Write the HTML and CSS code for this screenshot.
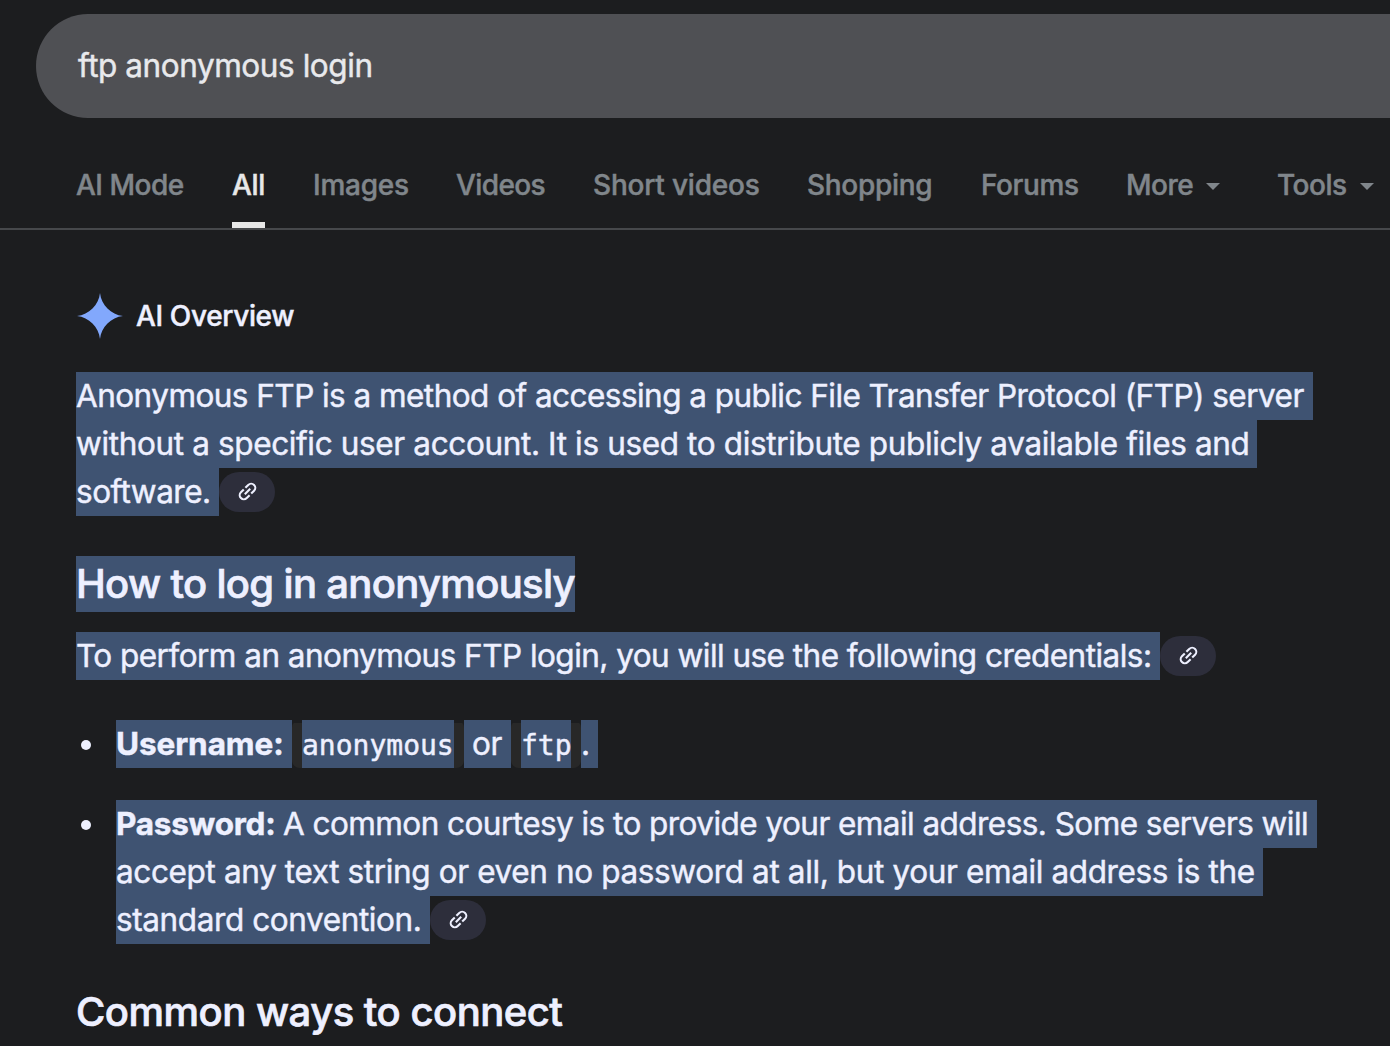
FILE: index.html
```html
<!DOCTYPE html>
<html lang="en">
<head>
<meta charset="utf-8">
<title>ftp anonymous login - Search</title>
<link rel="stylesheet" href="styles.css">
</head>
<body>
<svg class="defs" aria-hidden="true">
  <symbol id="link" viewBox="0 0 24 24">
    <g transform="rotate(-45 12 12)" fill="none" stroke="currentColor" stroke-width="2.2">
      <path d="M10.8 7.7H6.6a4.3 4.3 0 0 0 0 8.6H10.8M13.2 7.7h4.2a4.3 4.3 0 0 1 0 8.6H13.2M8 12h8"/>
    </g>
  </symbol>
</svg>
<header class="search"><span class="query">ftp anonymous login</span></header>
<nav class="tabs">
  <a class="tab ai-mode">AI Mode</a>
  <a class="tab all active">All</a>
  <a class="tab images">Images</a>
  <a class="tab videos">Videos</a>
  <a class="tab short">Short videos</a>
  <a class="tab shopping">Shopping</a>
  <a class="tab forums">Forums</a>
  <a class="tab more">More<i class="caret"></i></a>
  <a class="tab tools">Tools<i class="caret"></i></a>
</nav>
<main class="overview">
  <div class="title">
    <svg class="spark" viewBox="0 0 46 46"><path fill="#82a8fc" d="M23 0C24.3 12 34 21.7 46 23C34 24.3 24.3 34 23 46C21.7 34 12 24.3 0 23C12 21.7 21.7 12 23 0Z"/></svg>
    <span class="title-text">AI Overview</span>
  </div>
  <p class="intro">
    <span class="line"><span class="sel i1">Anonymous FTP is a method of accessing a public File Transfer Protocol (FTP) server</span></span>
    <span class="line"><span class="sel i2">without a specific user account. It is used to distribute publicly available files and</span></span>
    <span class="line"><span class="sel i3">software.</span><span class="chip"><svg><use href="#link"/></svg></span></span>
  </p>
  <h2 class="heading"><span class="sel h1">How to log in anonymously</span></h2>
  <p class="perform line"><span class="sel p1">To perform an anonymous FTP login, you will use the following credentials:</span><span class="chip"><svg><use href="#link"/></svg></span></p>
  <ul class="list">
    <li class="item">
      <span class="line"><span class="sel u1"><b>Username:</b></span><code class="code"><span class="sel c1">anonymous</span></code><span class="sel u2">or</span><code class="code"><span class="sel c2">ftp</span></code><span class="sel u3">.</span></span>
    </li>
    <li class="item">
      <span class="line"><span class="sel w1"><b>Password:</b><span class="courtesy">A common courtesy is to provide your email address. Some servers will</span></span></span>
      <span class="line"><span class="sel w2">accept any text string or even no password at all, but your email address is the</span></span>
      <span class="line"><span class="sel w3">standard convention.</span><span class="chip"><svg><use href="#link"/></svg></span></span>
    </li>
  </ul>
  <h2 class="heading connect">Common ways to connect</h2>
</main>
</body>
</html>
```
FILE: styles.css
```css
* { box-sizing: border-box; }
body {
  margin: 0;
  height: 1046px;
  overflow: hidden;
  padding-top: 14px;
  background: #1c1d1f;
  color: #eef0ff;
  font: 400 31.5px/48px Inter, "Liberation Sans", sans-serif;
  -webkit-text-stroke: .45px;
  white-space: nowrap;
}
.defs { display: none; }
p, h2, ul { margin: 0; padding: 0; }

.search {
  display: flex;
  align-items: center;
  height: 104px;
  margin-left: 36px;
  padding: 0 0 1px 42px;
  border-radius: 52px 0 0 52px;
  background: #4f5054;
}
.query { color: #e8e9ec; letter-spacing: -.43px; }

.tabs {
  display: flex;
  gap: 48px;
  height: 112px;
  padding: 43px 0 0 76px;
  border-bottom: 2px solid #46484b;
  color: #80868b;
  font-size: 28px;
  font-weight: 500;
  line-height: 48px;
}
.tab { display: flex; align-items: center; flex: none; height: 67px; padding-bottom: 19px; }
.active { color: #e8e8e8; border-bottom: 6px solid #e8e8e8; padding-bottom: 13px; }
.ai-mode { width: 108px; letter-spacing: -.5px; }
.all { width: 33px; letter-spacing: -.35px; }
.images { width: 95px; letter-spacing: -.25px; }
.videos { width: 89px; letter-spacing: -.6px; }
.short { width: 166px; letter-spacing: -.2px; }
.shopping { width: 126px; letter-spacing: -.3px; }
.forums { width: 97px; letter-spacing: -.4px; }
.more { width: 103px; letter-spacing: -.5px; }
.tools { letter-spacing: -.5px; }
.caret {
  margin: 3px 0 0 13px;
  border: 7px solid transparent;
  border-top-color: currentColor;
  border-bottom: 0;
}

.overview { padding: 63px 0 0 76px; }
.title { display: flex; align-items: center; height: 46px; gap: 13px; padding-left: 1px; font-size: 28px; font-weight: 500; }
.spark { width: 46px; height: 46px; }
.title-text { letter-spacing: -.36px; }
.intro { margin-top: 33px; }
.line { display: flex; height: 48px; }
.sel { display: block; flex: none; background: #3f5372; }
.chip {
  display: flex;
  align-items: center;
  justify-content: center;
  width: 56px;
  height: 40px;
  margin-top: 4px;
  border-radius: 20px;
  background: #2d2e3b;
}
.chip svg { width: 23px; height: 23px; margin-bottom: 1px; }
.i1 { width: 1237px; letter-spacing: -.54px; }
.i2 { width: 1181px; letter-spacing: -.36px; }
.i3 { width: 143px; letter-spacing: -.5px; }
.heading { display: flex; margin-top: 40px; font-size: 40px; font-weight: 500; line-height: 56px; -webkit-text-stroke: .7px; }
.h1 { width: 499px; letter-spacing: -.67px; }
.perform { margin-top: 20px; }
.p1 { width: 1084px; letter-spacing: -.53px; }

.list { display: grid; gap: 32px; margin-top: 40px; list-style: none; }
.item { display: grid; grid-template-columns: 40px auto; }
.item::before {
  content: "";
  grid-row: 1;
  width: 10px;
  height: 10px;
  margin: 20px 0 0 5px;
  border-radius: 50%;
  background: #eef0ff;
}
.item .line { grid-column: 2; }
.u1 { width: 176px; letter-spacing: -.1px; }
.u2 { width: 47px; padding-left: 8px; letter-spacing: -.4px; }
.u3 { width: 17px; }
.code {
  display: flex;
  height: 48px;
  padding: 0 10px;
  background: linear-gradient(#282828, #282828) 0 3px / 100% 45px no-repeat;
  border-radius: 8px;
  font: 28px/48px "DejaVu Sans Mono", monospace;
}
.code .sel { height: 48px; line-height: 51px; }
.c1 { width: 152px; }
.c2 { width: 50px; }
.w1 { display: flex; width: 1201px; letter-spacing: -.55px; }
.w1 b { width: 167px; letter-spacing: -.25px; }
.w2 { width: 1147px; letter-spacing: -.37px; }
.w3 { width: 314px; letter-spacing: -.4px; }
.connect { letter-spacing: -.5px; }
```
